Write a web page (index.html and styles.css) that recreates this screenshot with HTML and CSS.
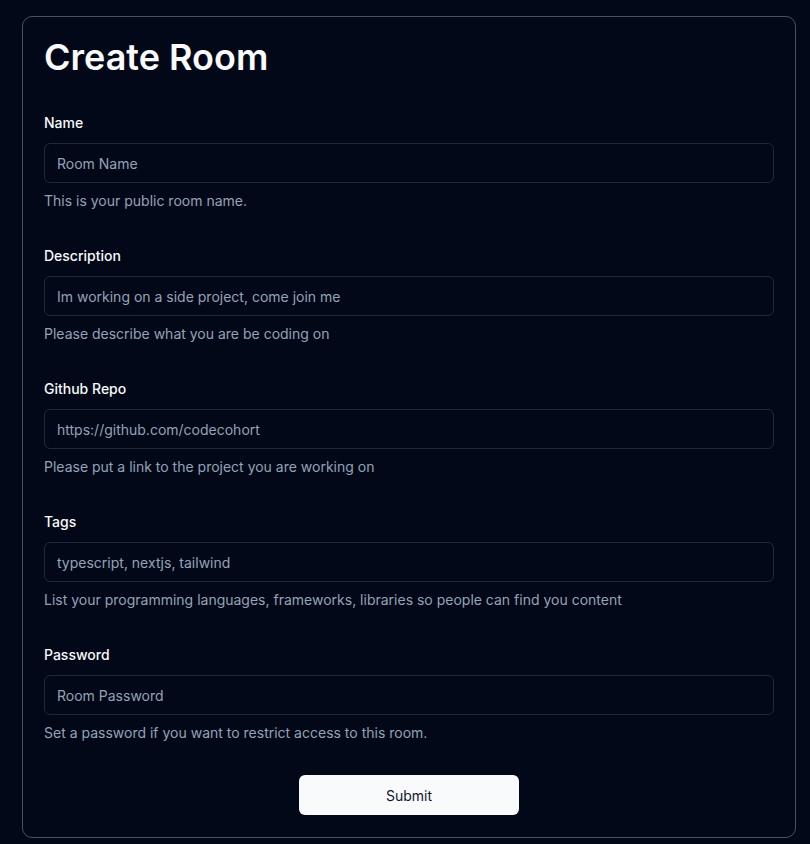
FILE: index.html
```html
<!DOCTYPE html>
<html lang="en">
<head>
<meta charset="utf-8">
<title>Create Room</title>
<link rel="stylesheet" href="styles.css">
</head>
<body>
<main class="page">
  <section class="card">
    <h1 class="title">Create Room</h1>
    <form class="form">
      <div class="field">
        <label class="label" for="name">Name</label>
        <input class="input" id="name" type="text" placeholder="Room Name">
        <p class="hint">This is your public room name.</p>
      </div>
      <div class="field">
        <label class="label" for="desc">Description</label>
        <input class="input" id="desc" type="text" placeholder="Im working on a side project, come join me">
        <p class="hint">Please describe what you are be coding on</p>
      </div>
      <div class="field">
        <label class="label" for="repo">Github Repo</label>
        <input class="input" id="repo" type="text" placeholder="https://github.com/codecohort">
        <p class="hint">Please put a link to the project you are working on</p>
      </div>
      <div class="field">
        <label class="label" for="tags">Tags</label>
        <input class="input" id="tags" type="text" placeholder="typescript, nextjs, tailwind">
        <p class="hint">List your programming languages, frameworks, libraries so people can find you content</p>
      </div>
      <div class="field">
        <label class="label" for="pw">Password</label>
        <input class="input" id="pw" type="text" placeholder="Room Password">
        <p class="hint">Set a password if you want to restrict access to this room.</p>
      </div>
      <div class="actions">
        <button class="button" type="submit">Submit</button>
      </div>
    </form>
  </section>
</main>
</body>
</html>
```

FILE: styles.css
```css
* {
  box-sizing: border-box;
}

html, body {
  margin: 0;
  background: #020817;
}

body {
  font-family: Inter, "Noto Sans", sans-serif;
  color: #f8fafc;
}

.page {
  padding: 16px 14px 0 22px;
}

.card {
  border: 1px solid #4a505d;
  border-radius: 10px;
  padding: 20px 21px 22px;
}

.title {
  margin: 0 0 36px;
  font-size: 36px;
  line-height: 40px;
  font-weight: 600;
}

.form {
  display: flex;
  flex-direction: column;
  gap: 35px;
}

.field {
  display: flex;
  flex-direction: column;
}

.label {
  font-size: 14px;
  line-height: 20px;
  font-weight: 500;
  margin-bottom: 10px;
}

.input {
  height: 40px;
  width: 100%;
  border: 1px solid #1e293b;
  border-radius: 6px;
  background: transparent;
  padding: 0 12px;
  font-family: inherit;
  font-size: 14px;
  color: #f8fafc;
  outline: none;
}

.input::placeholder {
  color: #94a3b8;
}

.hint {
  margin: 8px 0 0;
  font-size: 14px;
  line-height: 20px;
  color: #94a3b8;
}

.actions {
  display: flex;
  justify-content: center;
  margin-top: -3px;
}

.button {
  width: 220px;
  height: 40px;
  border: none;
  border-radius: 6px;
  background: #f8fafc;
  color: #0f172a;
  font-family: inherit;
  font-size: 14px;
  font-weight: 400;
}
```
